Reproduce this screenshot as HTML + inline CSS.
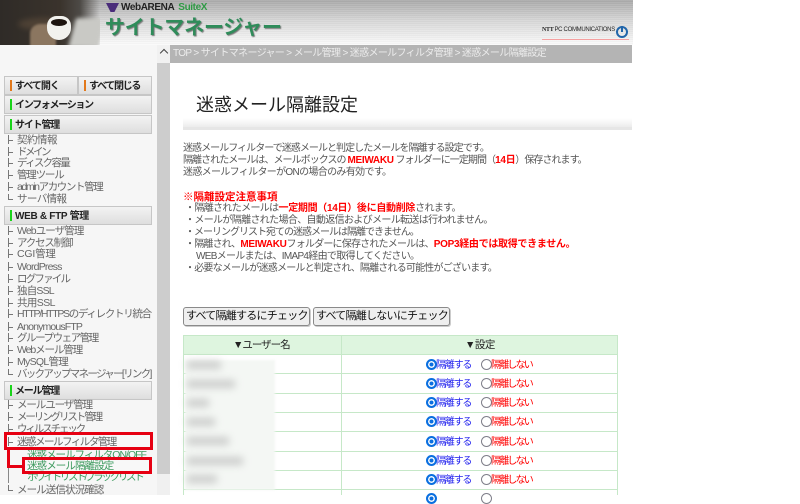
<!DOCTYPE html>
<html lang="ja"><head><meta charset="utf-8">
<style>
html,body{margin:0;padding:0;background:#fff}
body{width:800px;height:495px;overflow:hidden;position:relative;font-family:"Liberation Sans","Noto Sans CJK JP",sans-serif}
div{position:absolute;white-space:nowrap}
#hdr{left:0;top:0;width:633px;height:45px;background:repeating-linear-gradient(180deg,rgba(255,255,255,.08) 0 1px,rgba(0,0,0,.02) 1px 2px),linear-gradient(180deg,#a9a9a9 0,#d6d6d6 45%,#fbfbfb 100%)}
#photo{left:0;top:0;width:100px;height:45px;background:linear-gradient(90deg,#2f2b27 0,#3a332c 60%,#4d4a46 80%,rgba(170,170,170,0) 100%);overflow:hidden}
#side{left:0;top:45px;width:157px;height:450px;background:#f6f6f6}
#sb{left:157px;top:45px;width:13px;height:429px;background:#cdcdcd}
#sb2{left:157px;top:474px;width:13px;height:21px;background:#f0f0f0}
#sbt{left:157px;top:45px;width:13px;height:18px;background:#f1f1f1}
#crumb{left:170px;top:45px;width:462px;height:18px;background:#b4b4b4;color:#ececec;font-size:10px;line-height:18px;padding-left:3px;box-sizing:border-box;letter-spacing:-.65px}
.btn{box-sizing:border-box;height:19px;background:linear-gradient(180deg,#f3f3f3,#dedede);border:1px solid #c6c6c6;font-size:10px;font-weight:bold;color:#222;line-height:19px;padding-left:10px}
.btn i{position:absolute;left:5px;top:3px;width:2px;height:11px}
.o i{background:#e2781a}.g i{background:#1ad41a}
.t{left:17px;font-size:10.5px;line-height:12px;color:#666;margin-top:1px}
.t:before{content:"";position:absolute;left:-9px;top:1px;height:9px;border-left:1px solid #777}
.t:after{content:"";position:absolute;left:-9px;top:6px;width:5px;border-top:1px solid #777}
.e:before{height:6px}
.s{left:27px;color:#3d9a5e;font-size:10.5px;line-height:12px}
.p{left:183px;font-size:10px;line-height:12px;color:#555}
.rb{color:#f00;font-weight:bold;letter-spacing:-.3px}
.red{border:3px solid #e60012;box-sizing:border-box;background:#f8f8f8}
.b{box-sizing:border-box;height:19px;background:#efefef;border:1px solid #8a8a8a;border-radius:3px;font-size:11px;letter-spacing:-.75px;line-height:17px;color:#111;overflow:hidden;padding-left:2px;box-shadow:1px 1px 0 #ccc}
.hl{left:183px;width:435px;height:1px;background:#c6e8c8}
.c{width:11px;height:11px;border-radius:50%;box-sizing:border-box}
.on{left:426px;border:2px solid #0a6fe0;background:#0a6fe0;box-shadow:inset 0 0 0 1.5px #fff}
.off{left:481px;border:1px solid #7f7f8a;background:#fff}
.y{left:436px;font-size:10px;line-height:12px;color:#2424ee;letter-spacing:-1.2px;margin-top:2px}
.n{left:491px;font-size:10px;line-height:12px;color:#f00;letter-spacing:-1.8px;margin-top:2px}
.bl{left:187px;height:8px;background:#aaa;filter:blur(4px);opacity:.55}
</style></head><body>

<div id="hdr"></div>
<div id="photo">
<div style="left:18px;top:18px;width:50px;height:12px;background:#5a4a3a;opacity:.7;border-radius:50%;filter:blur(3px)"></div>
<div style="left:72px;top:18px;width:30px;height:30px;background:#c9c9c5;filter:blur(2px);transform:skewX(-15deg)"></div>
<div style="left:30px;top:24px;width:26px;height:24px;background:#8b7660;border-radius:40% 30% 0 0;filter:blur(1px)"></div>
<div style="left:47px;top:16px;width:24px;height:24px;background:#f2f2ee;border-radius:40% 40% 50% 50%"></div>
<div style="left:51px;top:19px;width:16px;height:7px;background:#1d1510;border-radius:50%"></div>
</div>
<div style="left:106px;top:3px;width:13px;height:9px;background:#4a2d7a;clip-path:polygon(0 0,100% 0,65% 100%,35% 100%)"></div>
<div style="left:121px;top:1px;font-size:10px;line-height:14px;font-weight:bold;color:#222;letter-spacing:-.4px">WebARENA<span style="color:#2f9a45;margin-left:4px">SuiteX</span></div>
<div style="left:105px;top:16px;font-size:20px;line-height:24px;font-weight:bold;color:#2f8c5a;text-shadow:1px 1px 1px #777;letter-spacing:-.2px">サイトマネージャー</div>
<div style="left:542px;top:25px;font-size:6px;line-height:10px;font-weight:bold;color:#222;letter-spacing:-.3px;font-family:'Liberation Serif',serif">NTT<span style="font-family:'Liberation Sans',sans-serif;font-weight:normal;margin-left:1px">PC COMMUNICATIONS</span></div>
<div style="left:616px;top:26px;width:12px;height:12px;border:2px solid #2266aa;border-radius:50%;box-sizing:border-box"></div>
<div style="left:621px;top:26px;width:2px;height:6px;background:#2266aa"></div>
<div style="left:542px;top:39px;width:87px;height:1px;background:#f5a0a0"></div>

<div id="side"></div>
<div id="sb"></div><div id="sb2"></div><div id="sbt"></div>
<div style="left:161px;top:50px;width:5px;height:5px;border-left:1.5px solid #444;border-top:1.5px solid #444;transform:rotate(45deg)"></div>
<div id="crumb">TOP &gt; サイトマネージャー &gt; メール管理 &gt; 迷惑メールフィルタ管理 &gt; 迷惑メール隔離設定</div>

<div class="btn o" style="left:4px;top:76px;width:74px;letter-spacing:-1px">すべて開く<i></i></div>
<div class="btn o" style="left:78px;top:76px;width:74px;letter-spacing:-1.3px">すべて閉じる<i></i></div>
<div class="btn g" style="left:4px;top:95px;width:148px;letter-spacing:-1.3px">インフォメーション<i></i></div>
<div class="btn g" style="left:4px;top:115px;width:148px;letter-spacing:-1.2px">サイト管理<i></i></div>

<div class="t" style="top:133px;letter-spacing:-.5px">契約情報</div>
<div class="t" style="top:145px;letter-spacing:-2.5px">ドメイン</div>
<div class="t" style="top:156px;letter-spacing:-1.7px">ディスク容量</div>
<div class="t" style="top:168px;letter-spacing:-1.2px">管理ツール</div>
<div class="t" style="top:180px;letter-spacing:-1.4px">adminアカウント管理</div>
<div class="t e" style="top:192px;letter-spacing:-.6px">サーバ情報</div>
<div class="btn g" style="left:4px;top:206px;width:148px;letter-spacing:-.3px">WEB &amp; FTP 管理<i></i></div>
<div class="t" style="top:224px;letter-spacing:-.9px">Webユーザ管理</div>
<div class="t" style="top:236px;letter-spacing:-1.2px">アクセス制御</div>
<div class="t" style="top:247px;letter-spacing:-.2px">CGI管理</div>
<div class="t" style="top:260px;letter-spacing:-.8px">WordPress</div>
<div class="t" style="top:272px;letter-spacing:-1.8px">ログファイル</div>
<div class="t" style="top:284px;letter-spacing:-.8px">独自SSL</div>
<div class="t" style="top:296px;letter-spacing:-.6px">共用SSL</div>
<div class="t" style="top:307px;letter-spacing:-1.3px">HTTP/HTTPSのディレクトリ統合</div>
<div class="t" style="top:320px;letter-spacing:-.85px">AnonymousFTP</div>
<div class="t" style="top:331px;letter-spacing:-1.45px">グループウェア管理</div>
<div class="t" style="top:343px;letter-spacing:-1.1px">Webメール管理</div>
<div class="t" style="top:355px;letter-spacing:-.7px">MySQL管理</div>
<div class="t e" style="top:367px;letter-spacing:-1.7px">バックアップマネージャー[リンク]</div>
<div class="btn g" style="left:4px;top:381px;width:148px;letter-spacing:-1.2px">メール管理<i></i></div>
<div class="t" style="top:398px;letter-spacing:-1.1px">メールユーザ管理</div>
<div class="t" style="top:410px;letter-spacing:-2.1px">メーリングリスト管理</div>
<div class="t" style="top:422px;letter-spacing:-2.1px">ウィルスチェック</div>
<div class="s" style="top:449px;letter-spacing:-1px">迷惑メールフィルタON/OFF</div>
<div class="s" style="top:471px;letter-spacing:-2.3px">ホワイトリスト/ブラックリスト</div>
<div class="t e" style="top:483px;letter-spacing:-.9px">メール送信状況確認</div>
<div style="left:8px;top:450px;width:1px;height:33px;background:#888"></div>
<div class="red" style="left:4px;top:432px;width:149px;height:18px"></div>
<div class="t" style="top:435px;letter-spacing:-1.5px">迷惑メールフィルタ管理</div>
<div style="left:7px;top:450px;width:3px;height:18px;background:#e60012"></div>
<div style="left:7px;top:465px;width:16px;height:3px;background:#e60012"></div>
<div class="red" style="left:22px;top:457px;width:130px;height:17px"></div>
<div class="s" style="top:460px;letter-spacing:-.9px">迷惑メール隔離設定</div>

<div style="left:196px;top:93px;font-size:18px;line-height:25px;color:#222">迷惑メール隔離設定</div>
<div style="left:183px;top:118px;width:449px;height:9px;background:linear-gradient(180deg,#fff,#ececec)"></div>
<div style="left:183px;top:127px;width:449px;height:3px;background:#e6e6e6"></div>

<div class="p" style="top:143px;letter-spacing:-.95px">迷惑メールフィルターで迷惑メールと判定したメールを隔離する設定です。</div>
<div class="p" style="top:155px;letter-spacing:-.95px">隔離されたメールは、メールボックスの <span class="rb">MEIWAKU</span> フォルダーに一定期間（<span class="rb">14日</span>）保存されます。</div>
<div class="p" style="top:167px;letter-spacing:-.67px">迷惑メールフィルターがONの場合のみ有効です。</div>
<div class="p" style="top:191px;color:#f00;font-weight:bold;font-size:10.5px">※隔離設定注意事項</div>
<div class="p" style="top:203px;left:185px;letter-spacing:-.65px">・隔離されたメールは<span class="rb">一定期間（14日）後に自動削除</span>されます。</div>
<div class="p" style="top:215px;left:185px;letter-spacing:-.65px">・メールが隔離された場合、自動返信およびメール転送は行われません。</div>
<div class="p" style="top:227px;left:185px;letter-spacing:-1px">・メーリングリスト宛ての迷惑メールは隔離できません。</div>
<div class="p" style="top:239px;left:185px;letter-spacing:-.8px">・隔離され、<span class="rb">MEIWAKU</span>フォルダーに保存されたメールは、<span class="rb">POP3経由では取得できません。</span></div>
<div class="p" style="top:251px;left:196px;letter-spacing:-.7px">WEBメールまたは、IMAP4経由で取得してください。</div>
<div class="p" style="top:263px;left:185px;letter-spacing:-.8px">・必要なメールが迷惑メールと判定され、隔離される可能性がございます。</div>

<div class="b" style="left:183px;top:307px;width:127px">すべて隔離するにチェック</div>
<div class="b" style="left:313px;top:307px;width:137px">すべて隔離しないにチェック</div>

<div style="left:183px;top:335px;width:435px;height:19px;background:#def5df"></div>
<div style="left:183px;top:335px;width:1px;height:160px;background:#c6e8c8"></div>
<div style="left:341px;top:335px;width:1px;height:160px;background:#c6e8c8"></div>
<div style="left:617px;top:335px;width:1px;height:160px;background:#c6e8c8"></div>
<div class="hl" style="top:335px"></div>
<div class="hl" style="top:354px"></div>
<div class="hl" style="top:373px"></div>
<div class="hl" style="top:393px"></div>
<div class="hl" style="top:412px"></div>
<div class="hl" style="top:431px"></div>
<div class="hl" style="top:451px"></div>
<div class="hl" style="top:470px"></div>
<div class="hl" style="top:489px"></div>
<div style="left:233px;top:339px;font-size:10.5px;line-height:12px;color:#222;letter-spacing:-1px">▼ユーザー名</div>
<div style="left:465px;top:339px;font-size:10.5px;line-height:12px;color:#222;letter-spacing:-.5px">▼設定</div>

<div style="left:185px;top:360px;width:90px;height:130px;background:#f4f7f4;filter:blur(1px)"></div>
<div class="bl" style="top:361px;width:34px"></div>
<div class="bl" style="top:380px;width:48px"></div>
<div class="bl" style="top:399px;width:22px"></div>
<div class="bl" style="top:418px;width:28px"></div>
<div class="bl" style="top:437px;width:42px"></div>
<div class="bl" style="top:457px;width:56px"></div>
<div class="bl" style="top:475px;width:30px"></div>

<div class="c on" style="top:359px"></div><div class="y" style="top:358px">隔離する</div><div class="c off" style="top:359px"></div><div class="n" style="top:358px">隔離しない</div>
<div class="c on" style="top:378px"></div><div class="y" style="top:377px">隔離する</div><div class="c off" style="top:378px"></div><div class="n" style="top:377px">隔離しない</div>
<div class="c on" style="top:397px"></div><div class="y" style="top:396px">隔離する</div><div class="c off" style="top:397px"></div><div class="n" style="top:396px">隔離しない</div>
<div class="c on" style="top:416px"></div><div class="y" style="top:415px">隔離する</div><div class="c off" style="top:416px"></div><div class="n" style="top:415px">隔離しない</div>
<div class="c on" style="top:436px"></div><div class="y" style="top:435px">隔離する</div><div class="c off" style="top:436px"></div><div class="n" style="top:435px">隔離しない</div>
<div class="c on" style="top:455px"></div><div class="y" style="top:454px">隔離する</div><div class="c off" style="top:455px"></div><div class="n" style="top:454px">隔離しない</div>
<div class="c on" style="top:474px"></div><div class="y" style="top:473px">隔離する</div><div class="c off" style="top:474px"></div><div class="n" style="top:473px">隔離しない</div>
<div class="c on" style="top:493px"></div><div class="c off" style="top:493px"></div>
</body></html>
